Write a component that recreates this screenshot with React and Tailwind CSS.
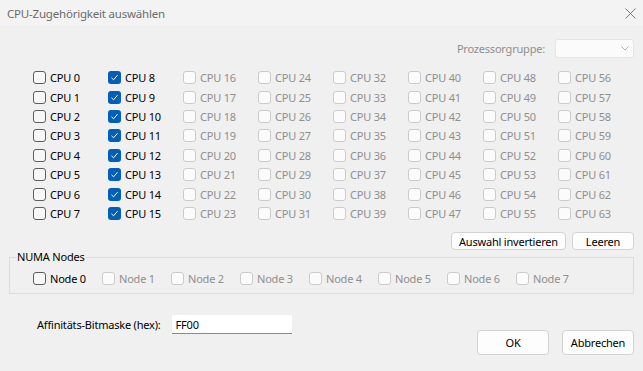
import React from "react";

const font = { fontFamily: '"Noto Sans", "Open Sans", sans-serif' };

function Check({ checked, disabled }) {
  if (checked) {
    return (
      <span className="w-[13px] h-[13px] rounded-[3px] bg-[#005fb8] flex items-center justify-center shrink-0">
        <svg width="9" height="9" viewBox="0 0 9 9">
          <path d="M1.5 4.8 L3.6 6.8 L7.5 2.2" fill="none" stroke="white" strokeWidth="1" />
        </svg>
      </span>
    );
  }
  return (
    <span
      className={
        "w-[13px] h-[13px] rounded-[3px] border shrink-0 " +
        (disabled ? "border-[#cbcbcb] bg-[#fbfbfb]" : "border-[#5d5d5d] bg-[#f7f7f7]")
      }
    />
  );
}

function Item({ label, checked, disabled }) {
  return (
    <div className="flex items-center gap-[4px]">
      <Check checked={checked} disabled={disabled} />
      <span className={disabled ? "text-[#8f8f8f]" : "text-black"}>{label}</span>
    </div>
  );
}

export default function App() {
  const cols = [];
  for (let c = 0; c < 8; c++) {
    const items = [];
    for (let r = 0; r < 8; r++) {
      const n = c * 8 + r;
      items.push(
        <div key={n} className="h-[19.4px] flex items-center">
          <Item label={`CPU ${n}`} checked={c === 1} disabled={c >= 2} />
        </div>
      );
    }
    cols.push(
      <div key={c} className="w-[75px] flex flex-col">
        {items}
      </div>
    );
  }
  return (
    <div
      className="w-[643px] h-[371px] bg-[#f0f0f0] text-[11px] tracking-[-0.2px] leading-[15px] flex flex-col overflow-hidden"
      style={font}
    >
      <div className="h-[26px] shrink-0 bg-[#f3f3f3] flex items-center justify-between pl-[7px] pr-[7px]">
        <span className="text-[#6b6b6b] text-[11.5px]">CPU-Zugehörigkeit auswählen</span>
        <svg width="11" height="11" viewBox="0 0 11 11">
          <path d="M0.5 0.5 L10.5 10.5 M10.5 0.5 L0.5 10.5" stroke="#7a7a7a" strokeWidth="1" />
        </svg>
      </div>
      <div className="flex justify-end items-center gap-[10px] pr-[9px] mt-[13px] shrink-0">
        <span className="text-[#8f8f8f]">Prozessorgruppe:</span>
        <div className="w-[79px] h-[19px] bg-[#fbfbfb] border border-[#e5e5e5] rounded-[3px] flex items-center justify-end pr-[4px]">
          <svg width="8" height="5" viewBox="0 0 8 5">
            <path d="M0.5 0.5 L4 4 L7.5 0.5" fill="none" stroke="#b0b0b0" strokeWidth="1" />
          </svg>
        </div>
      </div>
      <div className="flex pl-[33px] mt-[10px] shrink-0">{cols}</div>
      <div className="flex justify-end gap-[6px] pr-[9px] mt-[9px] shrink-0">
        <button className="w-[115px] h-[18px] bg-[#fdfdfd] border border-[#d3d3d3] rounded-[4px] text-black leading-none">
          Auswahl invertieren
        </button>
        <button className="w-[62px] h-[18px] bg-[#fdfdfd] border border-[#d3d3d3] rounded-[4px] text-black leading-none">
          Leeren
        </button>
      </div>
      <fieldset className="mx-[9px] border border-[#dcdcdc] px-[6px] shrink-0">
        <legend className="px-[1px] text-black leading-[14px]">NUMA Nodes</legend>
        <div className="flex items-center h-[20px] mt-[4px] mb-[5px] pl-[17px]">
          {[0, 1, 2, 3, 4, 5, 6, 7].map((n) => (
            <div key={n} className="w-[69px]">
              <Item label={`Node ${n}`} disabled={n > 0} />
            </div>
          ))}
        </div>
      </fieldset>
      <div className="flex items-start justify-between pl-[37px] pr-[9px] mt-[21px] shrink-0">
        <div className="flex items-center gap-[11px] h-[19px]">
          <span className="text-black">Affinitäts-Bitmaske (hex):</span>
          <div className="w-[120px] h-[19px] bg-white border-b border-[#8a8a8a] flex items-center pl-[4px] text-black">
            FF00
          </div>
        </div>
        <div className="flex gap-[13px] mt-[15px]">
          <button className="w-[72px] h-[25px] bg-[#fdfdfd] border border-[#d3d3d3] rounded-[4px] text-black">OK</button>
          <button className="w-[72px] h-[25px] bg-[#fdfdfd] border border-[#d3d3d3] rounded-[4px] text-black">Abbrechen</button>
        </div>
      </div>
    </div>
  );
}
